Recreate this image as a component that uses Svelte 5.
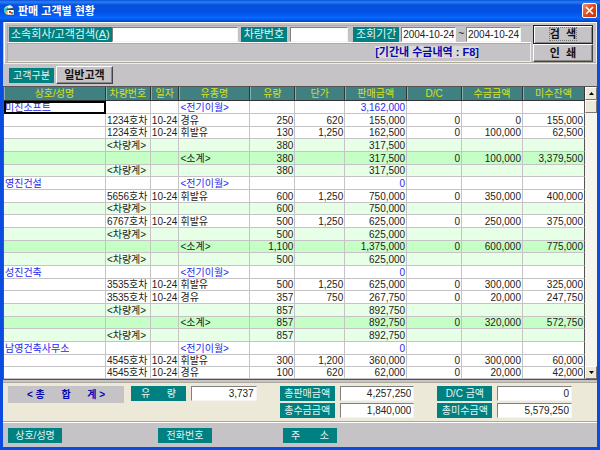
<script>
  const columns = [
    { name: '상호/성명', width: 102 },
    { name: '차량번호', width: 45 },
    { name: '일자', width: 28 },
    { name: '유종명', width: 71 },
    { name: '유량', width: 45 },
    { name: '단가', width: 50 },
    { name: '판매금액', width: 62 },
    { name: 'D/C', width: 55 },
    { name: '수금금액', width: 61 },
    { name: '미수잔액', width: 62 }
  ];

  const carry = (name, amount) => ({ kind: 'carry', cells: [name, '', '', '<전기이월>', '', '', amount, '', '', ''] });
  const sale = (car, fuel, qty, price, amount, paid, due) => ({
    kind: 'sale',
    cells: ['', car, '10-24', fuel, qty, price, amount, '0', paid, due]
  });
  const car = (qty, amount) => ({ kind: 'car', cells: ['', '<차량계>', '', '', qty, '', amount, '', '', ''] });
  const sub = (qty, amount, paid, due) => ({
    kind: 'sub',
    cells: ['', '', '', '<소계>', qty, '', amount, '0', paid, due]
  });

  const rows = [
    carry('미진소프트', '3,162,000'),
    sale('1234호차', '경유', '250', '620', '155,000', '0', '155,000'),
    sale('1234호차', '휘발유', '130', '1,250', '162,500', '100,000', '62,500'),
    car('380', '317,500'),
    sub('380', '317,500', '100,000', '3,379,500'),
    car('380', '317,500'),
    carry('영진건설', '0'),
    sale('5656호차', '휘발유', '600', '1,250', '750,000', '350,000', '400,000'),
    car('600', '750,000'),
    sale('6767호차', '휘발유', '500', '1,250', '625,000', '250,000', '375,000'),
    car('500', '625,000'),
    sub('1,100', '1,375,000', '600,000', '775,000'),
    car('500', '625,000'),
    carry('성진건축', '0'),
    sale('3535호차', '휘발유', '500', '1,250', '625,000', '300,000', '325,000'),
    sale('3535호차', '경유', '357', '750', '267,750', '20,000', '247,750'),
    car('857', '892,750'),
    sub('857', '892,750', '320,000', '572,750'),
    car('857', '892,750'),
    carry('남영건축사무소', '0'),
    sale('4545호차', '휘발유', '300', '1,200', '360,000', '300,000', '60,000'),
    sale('4545호차', '경유', '100', '620', '62,000', '20,000', '42,000')
  ];
</script>

<div class="window">
  <header class="titlebar">
    <svg class="app-icon" width="11" height="11" viewBox="0 0 11 11" aria-hidden="true">
      <path d="M1 2l5-2 3 2v3H1z" fill="#e8f4ff" />
      <path d="M0 3l4-1v5l-3 1-1-1z" fill="#37c8c8" />
      <path d="M3 4l6-1 1 1v6H3z" fill="#fff" stroke="#334" stroke-width=".5" />
      <path d="M3 4l6-1 1 1v1H3z" fill="#246" />
      <path d="M5 6h2v2H5z" fill="#d22" />
      <path d="M7 7h2v2H7z" fill="#2a8" />
      <path d="M1 8l2-2v4z" fill="#f3d13b" />
    </svg>
    <h1>판매 고객별 현황</h1>
    <button class="close" aria-label="닫기">
      <svg width="9" height="9" viewBox="0 0 9 9"><path d="M1 1l7 7M8 1L1 8" stroke="#fff" stroke-width="1.7" /></svg>
    </button>
  </header>

  <main>
    <section class="search">
      <div class="criteria">
        <div class="fields">
          <label class="tag" for="company">소속회사/고객검색(<u>A</u>)</label>
          <input id="company" class="company" type="text" />
          <label class="tag" for="car">차량번호</label>
          <input id="car" class="car-no" type="text" />
          <label class="tag" for="from">조회기간</label>
          <span class="period">
            <input id="from" type="text" value="2004-10-24" />
            <span>~</span>
            <input type="text" aria-label="조회기간 끝" value="2004-10-24" />
          </span>
        </div>
        <div class="hint"><span>[기간내 수금내역 : F8]</span></div>
      </div>
      <div class="actions">
        <button class="default"><span>검&nbsp; 색</span></button>
        <button>인&nbsp; 쇄</button>
      </div>
    </section>

    <section class="kind">
      <span class="tag small">고객구분</span>
      <button>일반고객</button>
    </section>

    <section class="grid">
      <table>
        <colgroup>
          {#each columns as c}<col style:width="{c.width}px" />{/each}
        </colgroup>
        <thead>
          <tr>{#each columns as c}<th scope="col">{c.name}</th>{/each}</tr>
        </thead>
        <tbody>
          {#each rows as row, r}
            <tr class={row.kind}>
              {#each row.cells as cell, i}
                <td class:num={i > 3} class:active={r === 0 && i === 0}>{cell}</td>
              {/each}
            </tr>
          {/each}
        </tbody>
      </table>
      <div class="scrollbar">
        <button aria-label="위로"><svg width="5" height="3" viewBox="0 0 5 3"><path d="M0 3h5L2.500 0z" /></svg></button>
        <div class="thumb"></div>
        <button class="down" aria-label="아래로"><svg width="5" height="3" viewBox="0 0 5 3"><path d="M0 0h5L2.500 3z" /></svg></button>
      </div>
    </section>

    <section class="totals">
      <strong>&lt; 총 &nbsp; &nbsp; &nbsp;합 &nbsp; &nbsp; &nbsp;계 &gt;</strong>
      <div class="pair qty">
        <label class="tag small" for="qty">유 &nbsp; &nbsp; &nbsp;량</label>
        <input id="qty" type="text" value="3,737" />
      </div>
      <div class="pair amounts">
        <label class="tag small" for="sales">총판매금액</label>
        <input id="sales" type="text" value="4,257,250" />
        <label class="tag small" for="paid">총수금금액</label>
        <input id="paid" type="text" value="1,840,000" />
      </div>
      <div class="pair amounts">
        <label class="tag small" for="dc">D/C 금액</label>
        <input id="dc" type="text" value="0" />
        <label class="tag small" for="due">총미수금액</label>
        <input id="due" type="text" value="5,579,250" />
      </div>
    </section>

    <footer>
      <div class="name"><span class="tag small">상호/성명</span></div>
      <div class="phone"><span class="tag small">전화번호</span></div>
      <div class="address"><span class="tag small">주 &nbsp; &nbsp; &nbsp; 소</span></div>
    </footer>
  </main>
</div>

<style>
  .window {
    box-sizing: border-box;
    min-height: 100vh;
    display: flex;
    flex-direction: column;
    background: #0a4be0;
    font: 10px/12px 'Liberation Sans', 'Noto Sans CJK KR', sans-serif;
    color: #222;
  }
  button,
  input {
    box-sizing: border-box;
    font: inherit;
    color: inherit;
    margin: 0;
    min-width: 0;
    border-radius: 0;
  }
  .titlebar {
    display: flex;
    align-items: center;
    height: 22px;
    box-sizing: border-box;
    padding: 0 3px 1px 4px;
    background: linear-gradient(#0a50d8, #2a80f8 2px, #0450dc 5px, #0450e4 12px, #0668ff 18px, #0040c8);
    color: #fff;
  }
  h1 {
    flex: 1;
    margin: 0 0 0 3px;
    font-size: 11px;
    line-height: 16px;
  }
  .close {
    width: 15px;
    height: 15px;
    padding: 0;
    display: grid;
    place-items: center;
    border: 1px solid #fff;
    border-radius: 2px;
    background: linear-gradient(135deg, #f09070, #e04818 50%, #c83808);
  }
  main {
    flex: 1;
    display: flex;
    flex-direction: column;
    margin: 0 3px 3px;
    background: #c6c3c6;
  }
  .search {
    display: flex;
    gap: 2px;
    margin-left: 1px;
    padding: 2px 3px 1px 2px;
    border: 1px solid;
    border-color: #fff #eee #eee #fff;
    box-shadow: inset 0 -1px #aca899;
  }
  .criteria {
    flex: 1;
    min-width: 0;
  }
  .fields {
    display: flex;
    align-items: center;
    height: 18px;
    padding: 0 10px 0 1px;
    border: 1px solid #aaa;
    border-bottom-color: #fff;
    border-right: 0;
    box-sizing: border-box;
  }
  .tag {
    box-sizing: border-box;
    height: 15px;
    padding: 0 2px;
    background: #008080;
    color: #e4f4f0;
    font-size: 11px;
    line-height: 15px;
    text-align: center;
    white-space: nowrap;
  }
  .tag.small {
    font-size: 10px;
  }
  .fields .tag:not(:first-child) {
    width: 46px;
  }
  input {
    height: 15px;
    padding: 0 2px;
    border: 1px solid;
    border-color: #808080 #f4f4f4 #f4f4f4 #808080;
    background: #fff;
    outline: 0;
  }
  .company {
    flex: 131;
    width: 0;
    margin-right: 3px;
  }
  .car-no {
    flex: 57;
    width: 0;
    margin: 0 5px 0 3px;
  }
  .period {
    display: flex;
    align-items: center;
    gap: 2px;
    margin-left: 2px;
  }
  .period input {
    width: 55px;
    padding: 0 1px;
  }
  .hint {
    box-sizing: border-box;
    height: 19px;
    padding-right: 51px;
    border: 1px solid;
    border-color: #aaa #eee #eee #aaa;
    text-align: right;
    font-size: 11px;
    line-height: 17px;
    font-weight: bold;
    color: #0808b0;
  }
  .hint span {
    background: #dcdad4;
  }
  .actions {
    display: flex;
    flex-direction: column;
    width: 60px;
  }
  .actions button,
  .kind button {
    padding: 0;
    border: 1px solid;
    border-color: #fff #444 #444 #fff;
    box-shadow: inset -1px -1px #888;
    background: #c6c3c6;
    font-size: 11px;
    line-height: 12px;
    font-weight: bold;
    color: #111;
  }
  .actions button {
    flex: 1;
  }
  .actions .default {
    border-color: #222;
    box-shadow: inset 1px 1px #fff, inset -1px -1px #888;
  }
  .default span {
    outline: 1px dotted #777;
  }
  .kind {
    display: flex;
    align-items: center;
    gap: 2px;
    height: 22px;
    padding-left: 6px;
  }
  .kind .tag {
    width: 45px;
  }
  .kind button {
    width: 57px;
    height: 18px;
  }
  .grid {
    display: flex;
    border: 1px solid #555;
    border-right: 0;
    background: #fff;
  }
  table {
    flex: 1;
    min-width: 0;
    table-layout: fixed;
    border-collapse: separate;
    border-spacing: 0;
  }
  th,
  td {
    box-sizing: border-box;
    padding: 0 1px;
    overflow: hidden;
    white-space: nowrap;
    line-height: 11px;
  }
  th {
    height: 14px;
    border-right: 1px solid #333;
    border-bottom: 1px solid #333;
    box-shadow: inset 1px 0 #8ab0aa;
    background: #408080;
    color: #d8e020;
    font-weight: normal;
  }
  td {
    height: 13px;
    border-right: 1px solid #c6c3c6;
    border-bottom: 1px solid #c6c3c6;
  }
  tr:nth-child(3n) td,
  tr:last-child td {
    height: 12px;
  }
  td:last-child {
    border-right-color: #555;
  }
  .num {
    text-align: right;
  }
  .carry td {
    color: #2828f0;
  }
  .car td {
    background: #e6ffe6;
  }
  .sub td {
    background: #c6ffc6;
  }
  td.active {
    outline: 2px solid #000;
    outline-offset: -2px;
  }
  .scrollbar {
    display: flex;
    flex-direction: column;
    width: 12px;
    background: #f6f5ee;
  }
  .scrollbar button,
  .thumb {
    box-sizing: border-box;
    height: 13px;
    padding: 0;
    display: grid;
    place-items: center;
    border: 1px solid;
    border-color: #fff #777 #777 #fff;
    background: #ece9d8;
  }
  .scrollbar .down {
    margin-top: auto;
  }
  .totals {
    display: flex;
    align-items: flex-start;
    margin-top: 2px;
    padding: 3px 25px 3px 5px;
    border-top: 1px solid #aca899;
    border-bottom: 1px solid #aca899;
    background: #ece9d8;
  }
  .totals strong {
    width: 116px;
    margin-right: 7px;
    line-height: 17px;
    background: #c6c3c6;
    color: #0808b0;
    text-align: center;
    white-space: nowrap;
  }
  .pair {
    display: grid;
    grid-template-columns: 55px 1fr;
    gap: 2px 5px;
  }
  .qty {
    flex: 126;
  }
  .amounts {
    flex: 135;
    margin-left: 23px;
  }
  .pair input {
    width: 100%;
    text-align: right;
  }
  footer {
    display: flex;
    flex: 1;
    align-items: center;
    padding-left: 5px;
    border-top: 1px solid #fff;
  }
  footer div {
    display: flex;
  }
  .name {
    flex: 150;
  }
  .phone {
    flex: 125;
  }
  .address {
    flex: 314;
  }
  footer .tag {
    width: 54px;
  }
</style>
